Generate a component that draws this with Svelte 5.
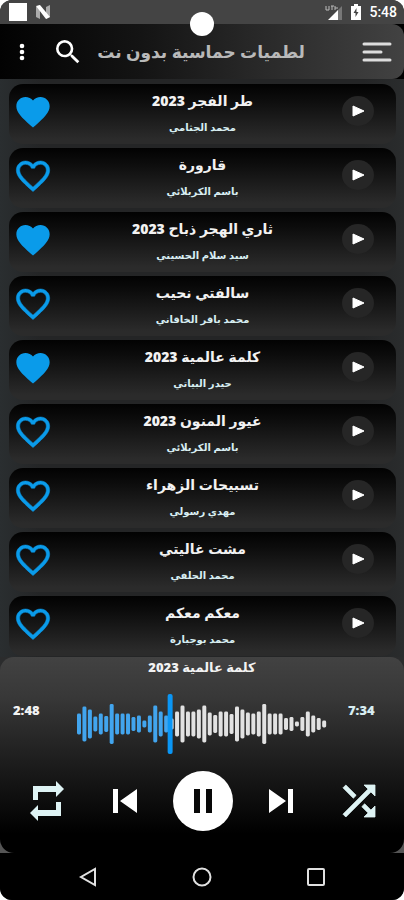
<script lang="ts">
  interface Track {
    title: string;
    artist: string;
    liked: boolean;
  }

  let tracks: Track[] = $state([
    { title: "طر الفجر 2023", artist: "محمد الجثامي", liked: true },
    { title: "قارورة", artist: "باسم الكربلائي", liked: false },
    { title: "ثاري الهجر ذباح 2023", artist: "سيد سلام الحسيني", liked: true },
    { title: "سالفتي نحيب", artist: "محمد باقر الخاقاني", liked: false },
    { title: "كلمة عالمية 2023", artist: "حيدر البياتي", liked: true },
    { title: "غيور المنون 2023", artist: "باسم الكربلائي", liked: false },
    { title: "تسبيحات الزهراء", artist: "مهدي رسولي", liked: false },
    { title: "مشت غاليتي", artist: "محمد الحلفي", liked: false },
    { title: "معكم معكم", artist: "محمد بوجبارة", liked: false },
  ]);

  let current = $state(4);
  let playing = $state(true);

  // Waveform bar heights, left to right
  const bars = [
    21, 35, 29, 15, 21, 16, 40, 21, 21, 21, 14, 17, 7, 17, 37, 25, 17, 11,
    25, 37, 25, 25, 29, 37, 23, 18, 25, 25, 20, 35, 29, 23, 21, 25, 40, 21,
    21, 21, 12, 14, 5, 14, 25, 17, 12, 7,
  ];
  const step = 5.47;
  const playhead = 91;

  function play(index: number) {
    current = index;
    playing = true;
  }

  function skip(by: number) {
    current = (current + by + tracks.length) % tracks.length;
  }
</script>

<div class="phone">
  <div class="status">
    <div class="status-group">
      <span class="notice"></span>
      <svg width="16" height="14" viewBox="0 0 16 14" aria-hidden="true">
        <path d="M1 2l4-2v14l-4-2zM11 2l4-2v12l-4 2z" fill="#aaa" />
        <path d="M1 1l4-1 10 12-4 2z" fill="#fff" />
      </svg>
    </div>
    <div class="status-group">
      <svg width="18" height="15" viewBox="0 0 18 15" aria-hidden="true">
        <path d="M17 1v14h-5V6z" fill="#777" />
        <path d="M13 5v10H3z" fill="#fff" />
        <path d="M1 1v4h3V1M6 1h3M7 1v4M10 1v4M10 3h3" stroke="#bbb" fill="none" />
      </svg>
      <svg width="10" height="16" viewBox="0 0 10 16" aria-hidden="true">
        <path d="M3 0h4v2h3v14H0V2h3z" fill="#fff" />
        <path d="M5.500 4L2.500 9h2v4l3-5h-2z" fill="#444" />
      </svg>
      <span class="clock">5:48</span>
    </div>
    <span class="camera"></span>
  </div>

  <header>
    <div class="header-inner">
      <div class="header-start">
        <button aria-label="More options">
          <svg width="24" height="24" viewBox="0 0 24 24">
            <circle cx="12" cy="6" r="2.300" />
            <circle cx="12" cy="12" r="2.300" />
            <circle cx="12" cy="18" r="2.300" />
          </svg>
        </button>
        <button aria-label="Search">
          <svg width="32" height="32" viewBox="0 0 24 24">
            <path d="M15.500 14h-.79l-.28-.27A6.470 6.470 0 0 0 16 9.500 6.500 6.500 0 1 0 9.500 16c1.610 0 3.090-.59 4.230-1.570l.27.28v.79l5 4.990L20.490 19l-4.990-5zm-6 0C7.010 14 5 11.990 5 9.500S7.010 5 9.500 5 14 7.010 14 9.500 11.990 14 9.500 14z" />
          </svg>
        </button>
      </div>
      <h1 dir="rtl">لطميات حماسية بدون نت</h1>
      <button class="menu" aria-label="Menu">
        <svg width="30" height="20" viewBox="0 0 30 20">
          <path d="M2 2h26M2 10h17M2 18h26" stroke="#ddd" stroke-width="3" stroke-linecap="round" />
        </svg>
      </button>
    </div>
  </header>

  <ul class="tracks">
    {#each tracks as track, i}
      <li>
        <button class="like" aria-label="Favourite" aria-pressed={track.liked} onclick={() => (track.liked = !track.liked)}>
          <svg width="40" height="40" viewBox="0 0 24 24">
            {#if track.liked}
              <path d="M12 21.350l-1.450-1.320C5.400 15.360 2 12.280 2 8.500 2 5.420 4.420 3 7.500 3c1.740 0 3.410.81 4.500 2.090C13.090 3.810 14.760 3 16.500 3 19.580 3 22 5.420 22 8.500c0 3.780-3.400 6.860-8.550 11.540z" />
            {:else}
              <path stroke-width="0.3" d="M16.500 3c-1.740 0-3.410.81-4.500 2.090C10.910 3.810 9.240 3 7.500 3 4.420 3 2 5.420 2 8.500c0 3.780 3.400 6.860 8.550 11.540L12 21.350l1.450-1.320C18.600 15.360 22 12.280 22 8.500 22 5.420 19.580 3 16.500 3zm-4.400 15.550l-.1.1-.1-.1C7.140 14.240 4 11.390 4 8.500 4 6.500 5.500 5 7.500 5c1.540 0 3.040.99 3.570 2.360h1.870C13.460 5.990 14.960 5 16.500 5c2 0 3.500 1.500 3.500 3.500 0 2.890-3.140 5.740-7.900 10.050z" />
            {/if}
          </svg>
        </button>
        <div class="info" dir="rtl">
          <span class="title">{track.title}</span>
          <span class="artist">{track.artist}</span>
        </div>
        <button class="play" aria-label="Play" onclick={() => play(i)}>
          <svg width="13" height="12" viewBox="0 0 13 12">
            <path d="M1 1l11 5-11 5z" stroke="#fff" stroke-linejoin="round" />
          </svg>
        </button>
      </li>
    {/each}
  </ul>

  <div class="player-wrap">
    <section class="player">
      <h2 dir="rtl">{tracks[current].title}</h2>
      <div class="progress">
        <time>2:48</time>
        <svg class="wave" viewBox="0 0 252 60" role="img" aria-label="Playback position">
          {#each bars as height, i}
            <rect x={i * step} y={30 - height / 2} width="4" {height} rx="1.500" fill={i * step < playhead ? "#42a5ee" : "#e2e2e2"} />
          {/each}
          <rect x={playhead} y="0" width="5" height="60" rx="2" fill="#0a96f5" />
        </svg>
        <time class="total">7:34</time>
      </div>
      <div class="controls">
        <button aria-label="Repeat">
          <svg width="38" height="42" viewBox="0 0 38 42" fill="#def3f4">
            <path d="M5 20V6h23V1l8 8-8 8v-5H10v8zM33 22v14H10v5l-8-8 8-8v5h18v-8z" />
          </svg>
        </button>
        <button aria-label="Previous" onclick={() => skip(-1)}>
          <svg width="26" height="26" viewBox="0 0 26 26">
            <path d="M1 1h5v24H1zM25 1v24L8 13z" />
          </svg>
        </button>
        <button class="pause" aria-label={playing ? "Pause" : "Resume"} onclick={() => (playing = !playing)}>
          <svg width="24" height="24" viewBox="0 0 24 24" fill="#080808">
            {#if playing}
              <path d="M3 0h6v24H3zM15 0h6v24h-6z" />
            {:else}
              <path d="M5 0l17 12L5 24z" />
            {/if}
          </svg>
        </button>
        <button aria-label="Next" onclick={() => skip(1)}>
          <svg width="26" height="26" viewBox="0 0 26 26">
            <path d="M20 1h5v24h-5zM1 1v24l17-12z" />
          </svg>
        </button>
        <button aria-label="Shuffle">
          <svg width="48" height="48" viewBox="0 0 24 24" fill="#def3f4" stroke="#def3f4" stroke-width="0.4">
            <path d="M10.590 9.170L5.410 4 4 5.410l5.170 5.170 1.420-1.410zM14.500 4l2.040 2.040L4 18.590 5.410 20 17.960 7.460 20 9.500V4h-5.500zm.33 9.410l-1.410 1.410 3.130 3.130L14.500 20H20v-5.500l-2.040 2.040-3.130-3.130z" />
          </svg>
        </button>
      </div>
    </section>
  </div>

  <nav>
    <button aria-label="Back">
      <svg width="20" height="20" viewBox="0 0 20 20"><path d="M17 2v16L3 10z" /></svg>
    </button>
    <button aria-label="Home">
      <svg width="20" height="20" viewBox="0 0 20 20"><circle cx="10" cy="10" r="8.500" /></svg>
    </button>
    <button aria-label="Recent apps">
      <svg width="20" height="20" viewBox="0 0 20 20"><rect x="2" y="2" width="16" height="16" rx="1" /></svg>
    </button>
  </nav>
</div>

<style>
  :global(body) {
    background: #fff;
  }

  .phone {
    display: flex;
    flex-direction: column;
    height: 100vh;
    overflow: hidden;
    border-radius: 12px;
    background: #2a2c2d;
    color: #fff;
    font-family: "Noto Sans", "DejaVu Sans", sans-serif;
  }

  button {
    display: flex;
    align-items: center;
    justify-content: center;
    padding: 0;
    border: 0;
    background: none;
    color: inherit;
    fill: #fff;
    cursor: pointer;
  }

  h1,
  h2,
  ul {
    margin: 0;
    padding: 0;
  }

  /* Status bar */
  .status {
    position: relative;
    display: flex;
    flex-shrink: 0;
    align-items: center;
    justify-content: space-between;
    height: 24px;
    padding: 0 7px 0 9px;
    background: #444;
  }

  .status-group {
    display: flex;
    align-items: center;
    gap: 8px;
  }

  .notice {
    width: 18px;
    height: 18px;
    background: #fff;
  }

  .clock {
    font: 500 14px/24px Roboto, sans-serif;
  }

  .camera {
    position: absolute;
    z-index: 1;
    top: 12px;
    left: calc(50% - 12px);
    width: 24px;
    height: 24px;
    border-radius: 50%;
    background: #fff;
  }

  /* App bar */
  header {
    flex-shrink: 0;
    background: #000;
  }

  .header-inner {
    display: grid;
    grid-template-columns: 1fr auto 1fr;
    align-items: center;
    height: 55px;
    padding: 0 12px 0 10px;
    border-radius: 0 12px 12px 0;
    background: linear-gradient(90deg, #020202, #141414 35%, #424242);
  }

  .header-start {
    display: flex;
    align-items: center;
    gap: 18px;
  }

  .menu {
    justify-self: end;
  }

  h1 {
    color: #b9b9b9;
    font-size: 17px;
    font-weight: 900;
    line-height: 32px;
    white-space: nowrap;
  }

  /* Track list */
  .tracks {
    display: flex;
    flex: 1 1 0;
    flex-direction: column;
    gap: 4px;
    min-height: 0;
    padding: 5px 8px 0 9px;
    overflow-y: auto;
    scrollbar-width: none;
    list-style: none;
    background: linear-gradient(90deg, #2a2e30, #242526 10%, #242526 90%, #2a2c2d);
  }

  li {
    display: grid;
    flex-shrink: 0;
    grid-template-columns: 48px 1fr 48px;
    height: 60px;
    padding-right: 14px;
    border-radius: 14px;
    background: linear-gradient(#020202, #0c0c0c 25%, #2b2b2b 92%);
  }

  .like {
    height: 56px;
    fill: #0a9bea;
    stroke: #0a9bea;
    stroke-width: 0;
  }

  .info {
    display: flex;
    flex-direction: column;
    align-items: center;
    padding: 5px 0 0 14px;
    font-weight: 900;
    white-space: nowrap;
  }

  .title {
    height: 26px;
    color: #f2f2f2;
    font-size: 14px;
    line-height: 24px;
  }

  .artist {
    color: #d8eef2;
    font-size: 10px;
    line-height: 24px;
  }

  .play {
    align-self: start;
    justify-self: center;
    width: 32px;
    height: 30px;
    margin-top: 12px;
    border-radius: 50%;
    background: #262626;
  }

  /* Player */
  .player-wrap {
    flex-shrink: 0;
    background: linear-gradient(#2b2c2d 50%, #555 50%);
  }

  .player {
    padding-bottom: 22px;
    border-radius: 14px;
    background: linear-gradient(#424242, #383838 20%, #1c1c1c 55%, #000 90%);
  }

  h2 {
    color: #f2f2f2;
    font-size: 13px;
    font-weight: 900;
    line-height: 20px;
    text-align: center;
  }

  .progress {
    display: grid;
    grid-template-columns: 48px 1fr 48px;
    column-gap: 16px;
    padding: 17px 12px 0 13px;
  }

  time {
    padding-top: 6px;
    color: #f2f2f2;
    font-size: 13px;
    font-weight: 900;
    line-height: 20px;
  }

  .total {
    padding-left: 4px;
    color: #d8eef2;
  }

  .wave {
    display: block;
    width: 100%;
    height: 60px;
  }

  .controls {
    display: grid;
    grid-template-columns: repeat(5, 1fr);
    place-items: center;
    margin-top: 17px;
    padding: 0 6px 0 8px;
  }

  .pause {
    width: 60px;
    height: 60px;
    border-radius: 50%;
    background: #fff;
  }

  /* System navigation */
  nav {
    display: grid;
    flex-shrink: 0;
    grid-template-columns: repeat(3, 1fr);
    height: 47px;
    padding: 0 31px;
    background: #000;
  }

  nav button {
    fill: none;
    stroke: #e0e0e0;
    stroke-width: 2;
  }
</style>
